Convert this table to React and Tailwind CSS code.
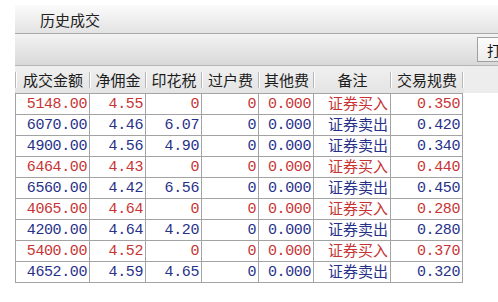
import React from 'react';

const COLS = [
  { key: 'amount', title: '成交金额', w: 'w-[74px]' },
  { key: 'comm', title: '净佣金', w: 'w-[56px]' },
  { key: 'stamp', title: '印花税', w: 'w-[56px]' },
  { key: 'transfer', title: '过户费', w: 'w-[57px]' },
  { key: 'other', title: '其他费', w: 'w-[55px]' },
  { key: 'note', title: '备注', w: 'w-[77px]' },
  { key: 'fee', title: '交易规费', w: 'w-[72px]' },
];

const ROWS = [
  ['5148.00', '4.55', '0', '0', '0.000', '证券买入', '0.350'],
  ['6070.00', '4.46', '6.07', '0', '0.000', '证券卖出', '0.420'],
  ['4900.00', '4.56', '4.90', '0', '0.000', '证券卖出', '0.340'],
  ['6464.00', '4.43', '0', '0', '0.000', '证券买入', '0.440'],
  ['6560.00', '4.42', '6.56', '0', '0.000', '证券卖出', '0.450'],
  ['4065.00', '4.64', '0', '0', '0.000', '证券买入', '0.280'],
  ['4200.00', '4.64', '4.20', '0', '0.000', '证券卖出', '0.280'],
  ['5400.00', '4.52', '0', '0', '0.000', '证券买入', '0.370'],
  ['4652.00', '4.59', '4.65', '0', '0.000', '证券卖出', '0.320'],
];

const mono = { fontFamily: '"Liberation Mono", "DejaVu Sans Mono", monospace' };

export default function App() {
  return (
    <div
      className="w-[498px] h-[302px] overflow-hidden bg-white pl-[15px] pt-[5px]"
      style={{ fontFamily: '"Noto Sans CJK SC", "Liberation Sans", sans-serif' }}
    >
      {/* title bar */}
      <div className="h-[29px] flex items-center pl-[25px] border-b border-[#a9a9a9] bg-gradient-to-b from-[#fbfbfb] to-[#e3e3e3]">
        <span className="text-[15px] leading-none text-[#222]">历史成交</span>
      </div>

      {/* toolbar */}
      <div className="h-[31px] flex items-center justify-end bg-gradient-to-b from-[#f3f3f3] to-[#d9d9d9]">
        <div className="h-[25px] w-[40px] -mr-[19px] flex items-center pl-[9px] border border-[#a0a0a0] bg-gradient-to-b from-[#fdfdfd] to-[#ececec] text-[14px] leading-none text-[#111] whitespace-nowrap overflow-hidden">
          打印
        </div>
      </div>

      {/* header row */}
      <div className="h-[28px] flex items-center border-t border-[#b5b5b5] bg-gradient-to-b from-[#f0f0f0] to-[#e4e4e4]">
        {COLS.map((c) => (
          <div key={c.key} className={`${c.w} h-full flex items-center shrink-0`}>
            <span className="w-[2px] h-[16px] border-l border-[#b8b8b8] border-r border-r-white shrink-0" />
            <span className="flex-1 text-center text-[15px] leading-none text-[#1c1c1c] whitespace-nowrap">{c.title}</span>
          </div>
        ))}
        <span className="w-[2px] h-[16px] border-l border-[#b8b8b8] border-r border-r-white shrink-0" />
        <div className="flex-1 h-full bg-[#ededed]" />
      </div>

      {/* body */}
      <div className="w-[448px] border-t border-l border-[#a3a3a3]">
        {ROWS.map((r, i) => {
          const buy = r[5] === '证券买入';
          const color = buy ? 'text-[#c83434]' : 'text-[#27318a]';
          return (
            <div key={i} className={`flex h-[21px] border-b border-[#a3a3a3] ${color}`}>
              {r.map((v, j) => (
                <div
                  key={j}
                  className={`${COLS[j].w} shrink-0 flex items-center justify-end pr-[2px] border-r border-[#a3a3a3] whitespace-nowrap`}
                >
                  {j === 5 ? (
                    <span className="text-[15px] leading-none -mt-[3px]">{v}</span>
                  ) : (
                    <span className="text-[15px] leading-none tracking-[-0.4px] pt-[1px]" style={mono}>{v}</span>
                  )}
                </div>
              ))}
            </div>
          );
        })}
      </div>
    </div>
  );
}
